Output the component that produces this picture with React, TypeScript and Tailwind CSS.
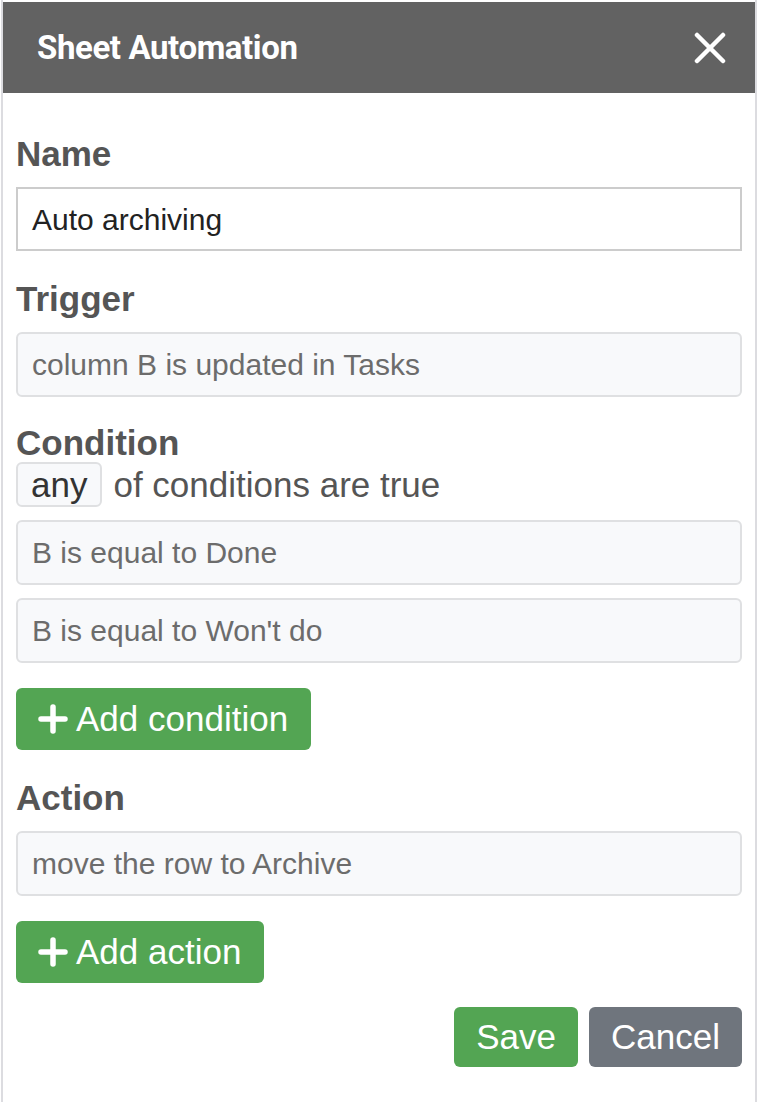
import type { ReactNode } from 'react';

const sans = { fontFamily: '"Liberation Sans", Arial, Helvetica, sans-serif' };

function Label({ children, className = '' }: { children: ReactNode; className?: string }) {
  return <div className={`text-[35px] font-bold leading-[36px] text-[#555] ${className}`}>{children}</div>;
}

function Field({ children, className = '' }: { children: ReactNode; className?: string }) {
  return (
    <div
      className={`flex h-[65px] items-center rounded-[6px] border-2 border-[#dfe0e2] bg-[#f8f9fb] pl-[14px] text-[30px] text-[#6c6c6c] ${className}`}
    >
      {children}
    </div>
  );
}

function Plus() {
  return (
    <svg width="30" height="30" viewBox="0 0 30 30" className="mr-[8px]">
      <path d="M15 3v24M3 15h24" stroke="white" strokeWidth="5.5" strokeLinecap="round" />
    </svg>
  );
}

function GreenButton({ children, className = '' }: { children: ReactNode; className?: string }) {
  return (
    <button
      className={`flex h-[62px] items-center self-start rounded-[6px] bg-[#53a553] pl-[22px] pr-[23px] text-[35px] text-white ${className}`}
    >
      <Plus />
      {children}
    </button>
  );
}

export default function App() {
  return (
    <div className="h-[1102px] w-[758px] bg-white" style={sans}>
      <div className="ml-[1px] flex h-full w-[756px] flex-col border-x-2 border-[#dcdce0] pt-[2px]">
        <header className="flex h-[91px] items-center justify-between bg-[#626262] pl-[34px] pr-[29px]">
          <h1
            className="text-[33px] font-bold tracking-[-0.4px] text-white"
            style={{ fontFamily: 'Roboto, "Liberation Sans", sans-serif' }}
          >
            Sheet Automation
          </h1>
          <svg width="32" height="32" viewBox="0 0 32 32">
            <path d="M3 3l26 26M29 3L3 29" stroke="white" strokeWidth="4.5" strokeLinecap="round" />
          </svg>
        </header>

        <div className="flex flex-col px-[13px] pt-[43px]">
          <Label>Name</Label>
          <div className="mt-[15px] flex h-[64px] items-center border-2 border-[#cccccc] bg-white pl-[14px] text-[30px] text-[#222]">
            Auto archiving
          </div>

          <Label className="mt-[30px]">Trigger</Label>
          <Field className="mt-[15px]">column B is updated in Tasks</Field>

          <Label className="mt-[28px]">Condition</Label>
          <div className="mt-[1px] flex h-[45px] items-center text-[35px] leading-[41px] text-[#555]">
            <span className="flex h-[45px] items-center rounded-[6px] border-2 border-[#dfe0e2] bg-[#f8f9fb] px-[13px] text-[#333]">
              any
            </span>
            <span className="ml-[11px]">of conditions are true</span>
          </div>
          <Field className="mt-[13px]">B is equal to Done</Field>
          <Field className="mt-[13px]">B is equal to Won't do</Field>

          <GreenButton className="mt-[25px]">Add condition</GreenButton>

          <Label className="mt-[30px]">Action</Label>
          <Field className="mt-[15px]">move the row to Archive</Field>

          <GreenButton className="mt-[25px]">Add action</GreenButton>

          <div className="mt-[24px] flex justify-end gap-[11px]">
            <button className="h-[60px] rounded-[6px] bg-[#53a553] px-[22px] text-[35px] text-white">Save</button>
            <button className="h-[60px] rounded-[6px] bg-[#6f757d] px-[22px] text-[35px] text-white">Cancel</button>
          </div>
        </div>
      </div>
    </div>
  );
}
